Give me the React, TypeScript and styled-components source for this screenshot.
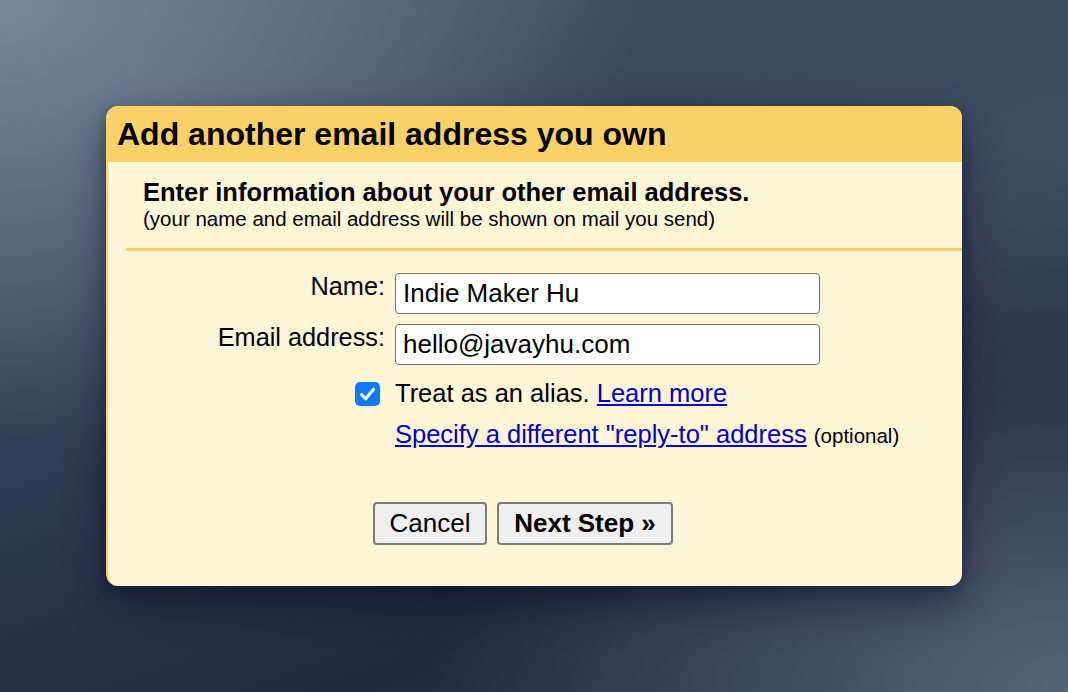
import React from 'react';
import styled, { createGlobalStyle } from 'styled-components';

const GlobalStyle = createGlobalStyle`
  html, body {
    margin: 0;
    padding: 0;
    height: 100%;
  }
  body {
    font-family: "Liberation Sans", Arial, sans-serif;
  }
  #root {
    height: 100%;
  }
`;

const Page = styled.div`
  width: 100%;
  height: 100vh;
  display: flex;
  align-items: center;
  justify-content: center;
  background:
    radial-gradient(ellipse 60% 65% at 0% 0%, rgba(120, 138, 156, 0.95), rgba(120, 138, 156, 0) 100%),
    radial-gradient(ellipse 60% 55% at 100% 100%, rgba(88, 102, 126, 0.95), rgba(88, 102, 126, 0) 100%),
    radial-gradient(ellipse 50% 40% at 100% 20%, rgba(70, 84, 108, 0.8), rgba(70, 84, 108, 0) 100%),
    linear-gradient(160deg, #4d5b70 0%, #2f3b54 45%, #1f2940 75%, #26314a 100%);
  overflow: hidden;
`;

const Dialog = styled.div`
  width: 856px;
  box-sizing: border-box;
  background: #fff6d8;
  border-left: 2px solid #f7cf63;
  border-radius: 12px;
  overflow: hidden;
  box-shadow: 0 18px 40px rgba(5, 10, 25, 0.45), 0 4px 12px rgba(5, 10, 25, 0.3);
`;

const Header = styled.div`
  height: 56px;
  box-sizing: border-box;
  padding: 10px 0 0 9px;
  background: #f9d166;
`;

const Title = styled.h1`
  margin: 0;
  font-size: 32px;
  line-height: 37px;
  font-weight: bold;
  color: #000;
`;

const Body = styled.div`
  padding: 16px 0 41px 18px;
`;

const Intro = styled.div`
  padding-left: 17px;
`;

const IntroTitle = styled.div`
  font-size: 25.5px;
  line-height: 29px;
  font-weight: bold;
  color: #000;
`;

const IntroNote = styled.div`
  font-size: 20.5px;
  line-height: 24px;
  color: #000;
`;

const Divider = styled.div`
  height: 3px;
  margin-top: 17px;
  background: #f9d166;
`;

const FormGrid = styled.div`
  display: grid;
  grid-template-columns: 259px 1fr;
  column-gap: 10px;
  row-gap: 9px;
  margin-top: 21px;
  align-items: start;
`;

const Label = styled.label`
  justify-self: end;
  font-size: 25.3px;
  line-height: 29px;
  color: #000;
`;

const TextInput = styled.input`
  width: 425px;
  height: 41px;
  box-sizing: border-box;
  margin-top: 1px;
  padding: 0 7px;
  border: 1.5px solid #747474;
  border-radius: 4px;
  background: #fff;
  font-family: "Liberation Sans", Arial, sans-serif;
  font-size: 26px;
  color: #000;
  outline: none;
`;

const CheckCell = styled.div<{ $top?: number }>`
  justify-self: end;
  margin-right: 5px;
  margin-top: ${(p) => (p.$top ?? 0) + 3}px;
  width: 25px;
  height: 24px;
`;

const OptionLine = styled.div<{ $top?: number }>`
  margin-top: ${(p) => p.$top ?? 0}px;
  font-size: 25.5px;
  line-height: 29px;
  color: #000;
  white-space: nowrap;
`;

const Link = styled.a`
  color: #0000cc;
  text-decoration: underline;
  text-underline-offset: 2px;
  cursor: pointer;
`;

const Small = styled.span`
  font-size: 20.5px;
`;

const ButtonRow = styled.div`
  display: flex;
  gap: 10px;
  margin-top: 52px;
  padding-left: 247px;
`;

const Button = styled.button<{ $primary?: boolean; $width: number }>`
  width: ${(p) => p.$width}px;
  height: 43px;
  box-sizing: border-box;
  padding: 0;
  border: 2px solid #7c7c7c;
  border-radius: 4px;
  background: #efefef;
  font-family: "Liberation Sans", Arial, sans-serif;
  font-size: 26px;
  font-weight: ${(p) => (p.$primary ? 'bold' : 'normal')};
  color: #000;
  cursor: pointer;
`;

const CheckIcon = () => (
  <svg width="25" height="24" viewBox="0 0 25 24">
    <rect x="0" y="0" width="25" height="24" rx="5" fill="#0b7bff" />
    <path
      d="M6.5 12.5 L10.6 16.8 L18.5 7.2"
      fill="none"
      stroke="#fff"
      strokeWidth="3"
      strokeLinecap="round"
      strokeLinejoin="round"
    />
  </svg>
);

const App: React.FC = () => {
  return (
    <>
      <GlobalStyle />
      <Page>
        <Dialog>
          <Header>
            <Title>Add another email address you own</Title>
          </Header>
          <Body>
            <Intro>
              <IntroTitle>Enter information about your other email address.</IntroTitle>
              <IntroNote>(your name and email address will be shown on mail you send)</IntroNote>
            </Intro>
            <Divider />
            <FormGrid>
              <Label htmlFor="name">Name:</Label>
              <TextInput id="name" type="text" defaultValue="Indie Maker Hu" />
              <Label htmlFor="email">Email address:</Label>
              <TextInput id="email" type="text" defaultValue="hello@javayhu.com" />
              <CheckCell $top={5}>
                <CheckIcon />
              </CheckCell>
              <OptionLine $top={5}>
                Treat as an alias. <Link>Learn more</Link>
              </OptionLine>
              <div />
              <OptionLine $top={3}>
                <Link>Specify a different "reply-to" address</Link> <Small>(optional)</Small>
              </OptionLine>
            </FormGrid>
            <ButtonRow>
              <Button $width={114}>Cancel</Button>
              <Button $width={176} $primary>
                Next Step »
              </Button>
            </ButtonRow>
          </Body>
        </Dialog>
      </Page>
    </>
  );
};

export default App;
